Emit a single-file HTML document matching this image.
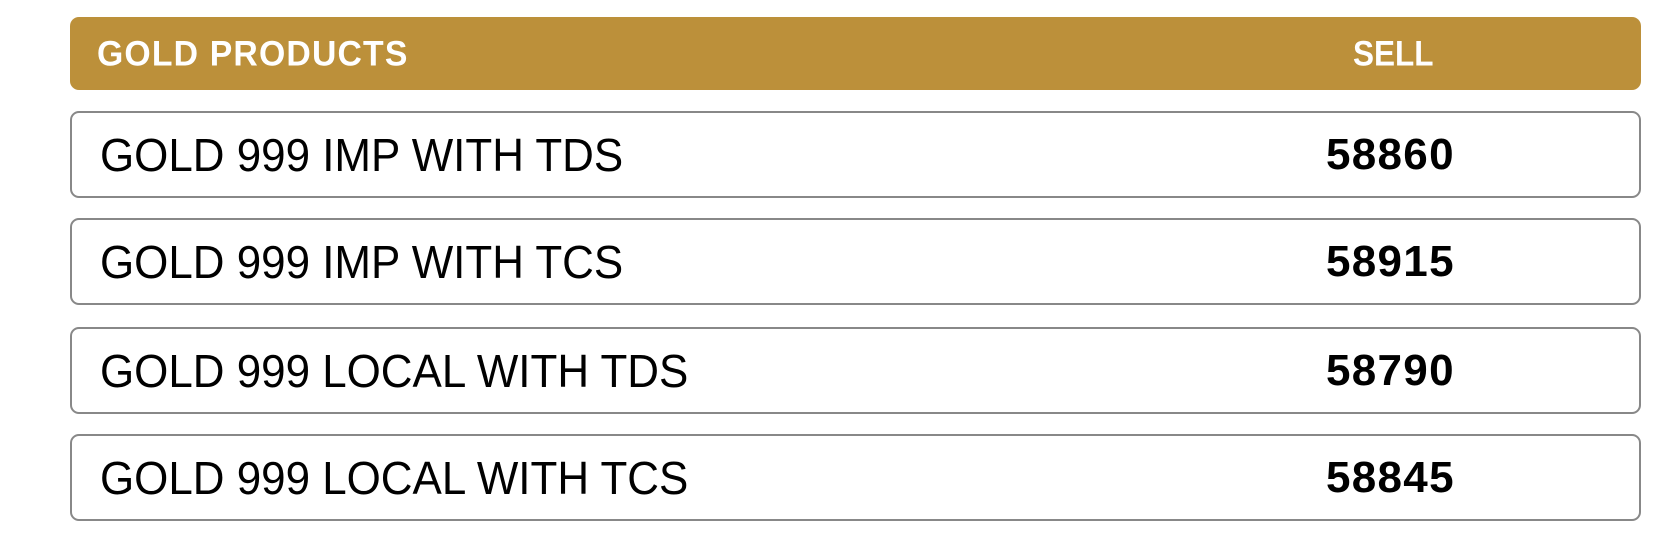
<!DOCTYPE html>
<html><head><meta charset="utf-8"><style>
body{margin:0;background:#fff;width:1676px;height:538px;overflow:hidden;font-family:"Liberation Sans",sans-serif;}
.h{position:absolute;left:70px;top:17px;width:1571px;height:73px;background:#bc903a;border-radius:9px;color:#fff;font-weight:bold;font-size:35px;}
.h span{position:absolute;top:50%;line-height:1;transform-origin:left center;}
.r{position:absolute;left:70px;width:1567px;height:83px;border:2px solid #888;border-radius:9px;background:#fff;}
.r span{position:absolute;top:50%;line-height:1;color:#000;transform-origin:left center;}
.n{font-size:46px;left:28px;transform:translateY(-50%) scaleX(0.955);}
.v{font-size:44px;font-weight:bold;left:1254px;letter-spacing:1.3px;transform:translateY(-50%);}
</style></head><body>
<div class="h"><span style="left:27px;transform:translateY(-50%) scaleX(0.965);letter-spacing:1.2px">GOLD PRODUCTS</span><span style="left:1283px;transform:translateY(-50%) scaleX(0.9)">SELL</span></div>
<div class="r" style="top:111px"><span class="n">GOLD 999 IMP WITH TDS</span><span class="v">58860</span></div>
<div class="r" style="top:218px"><span class="n">GOLD 999 IMP WITH TCS</span><span class="v">58915</span></div>
<div class="r" style="top:327px"><span class="n">GOLD 999 LOCAL WITH TDS</span><span class="v">58790</span></div>
<div class="r" style="top:434px"><span class="n">GOLD 999 LOCAL WITH TCS</span><span class="v">58845</span></div>
</body></html>
